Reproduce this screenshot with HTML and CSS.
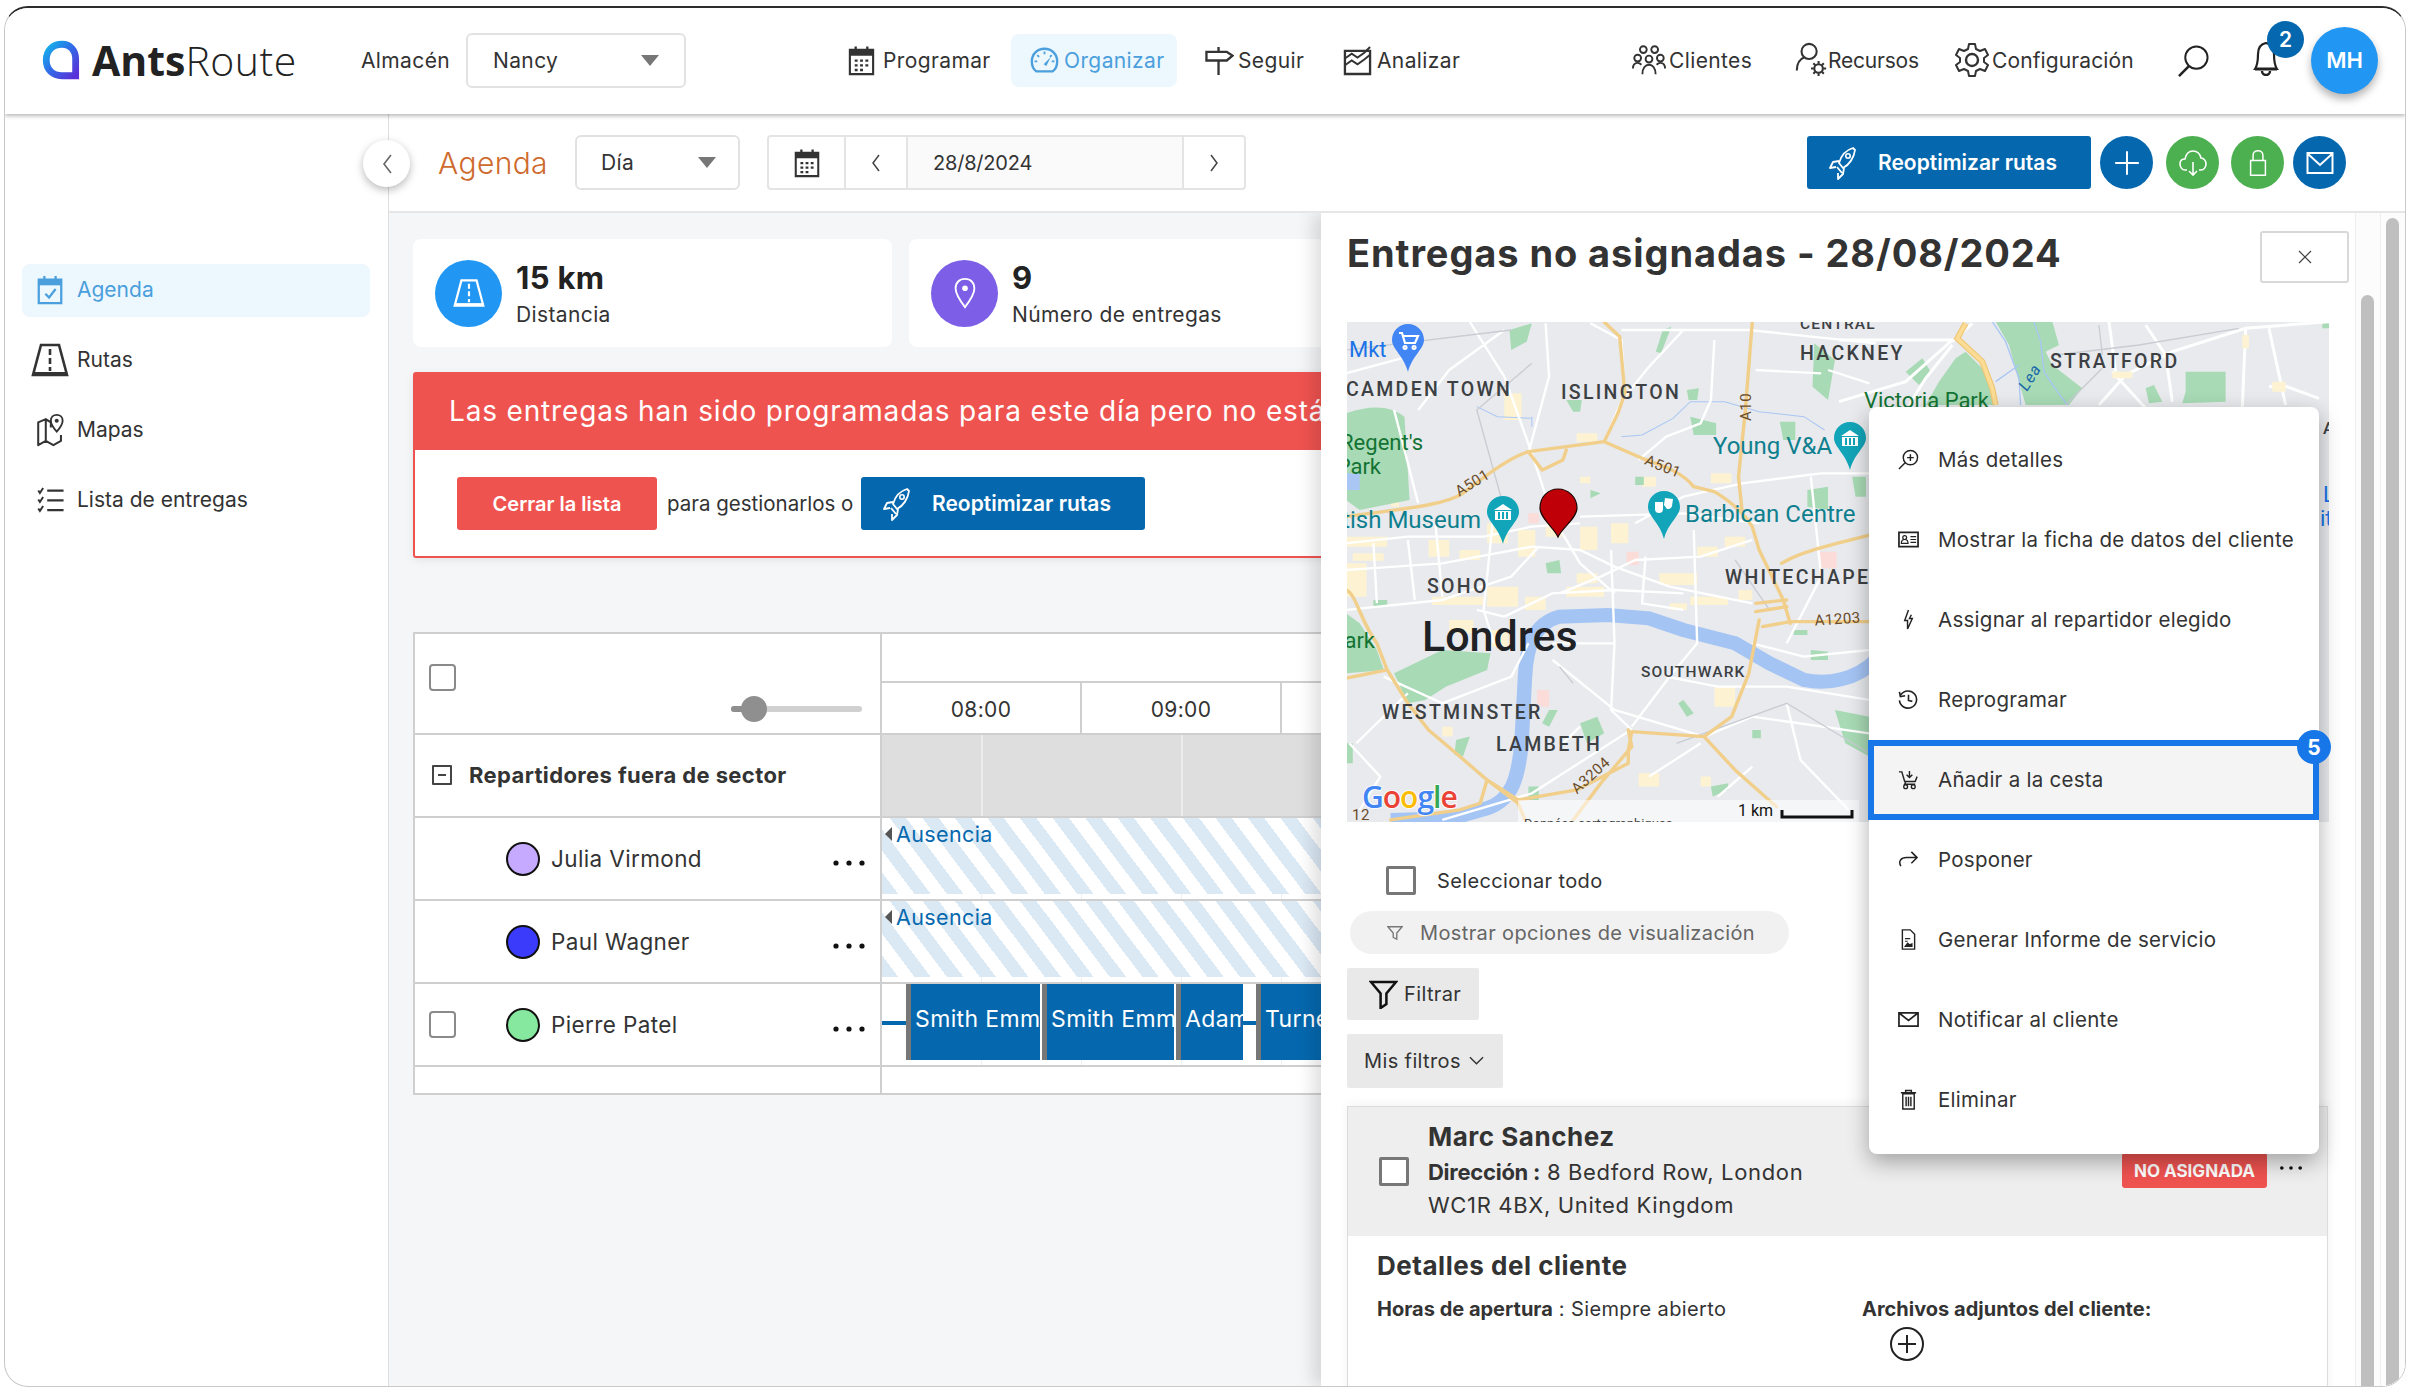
FILE: index.html
```html
<!DOCTYPE html>
<html lang="es">
<head>
<meta charset="utf-8">
<title>AntsRoute - Agenda</title>
<link rel="stylesheet" href="styles.css">
</head>
<body>
<svg class="defs" width="0" height="0" aria-hidden="true">
  <defs>
    <linearGradient id="logoGrad" x1="0" y1="0" x2="1" y2="1">
      <stop offset="0" stop-color="#12b5ea"/>
      <stop offset=".45" stop-color="#2f6fe8"/>
      <stop offset="1" stop-color="#5a30d8"/>
    </linearGradient>
    <symbol id="i-cal" viewBox="0 0 28 32">
      <path d="M2 5h24v25H2z" fill="none" stroke="currentColor" stroke-width="2.2"/>
      <path d="M2 5h24v6H2z" fill="currentColor"/>
      <path d="M8 1.5v6M20 1.5v6" stroke="currentColor" stroke-width="2.4"/>
      <path d="M7 15h3v2.4H7zM12.5 15h3v2.4h-3zM18 15h3v2.4h-3zM7 19.8h3v2.4H7zM12.5 19.8h3v2.4h-3zM18 19.8h3v2.4h-3zM7 24.6h3V27H7zM12.5 24.6h3V27h-3z" fill="currentColor"/>
    </symbol>
    <symbol id="i-road" viewBox="0 0 38 36">
      <path d="M10 3h18l8 30H2z" fill="none" stroke="currentColor" stroke-width="2.6"/>
      <path d="M2 30h34v3H2z" fill="currentColor"/>
      <path d="M19 7v6M19 16v6M19 25v4" stroke="currentColor" stroke-width="2.6"/>
    </symbol>
    <symbol id="i-rocket" viewBox="0 0 30 34">
      <path d="M25 2c-7 2-12 8-14 15l4 5c6-3 11-10 12-18zM11 15l-6 1-3 6 6-1M16 22l-1 6-5 5v-6M9 21l5 6" fill="none" stroke="#fff" stroke-width="1.8" stroke-linejoin="round"/>
      <circle cx="20" cy="10" r="2.2" fill="none" stroke="#fff" stroke-width="1.6"/>
    </symbol>
    <symbol id="i-dots" viewBox="0 0 34 8">
      <circle cx="4" cy="4" r="2.6"/><circle cx="17" cy="4" r="2.6"/><circle cx="30" cy="4" r="2.6"/>
    </symbol>
    <symbol id="i-caret" viewBox="0 0 18 11"><path d="M0 0h18L9 11z"/></symbol>
  </defs>
</svg>

<div class="frame">
  <header class="topbar">
    <div class="logo">
      <svg class="logo-mark" viewBox="0 0 40 40"><path d="M20 5c8 0 13 6 13 14v16H20C11 35 5 29 5 20S11 5 20 5z" fill="none" stroke="url(#logoGrad)" stroke-width="6.500"/></svg>
      <span class="logo-text"><b>Ants</b>Route</span>
    </div>
    <span class="wh-label">Almacén</span>
    <div class="select wh-select"><span>Nancy</span><svg class="caret"><use href="#i-caret"/></svg></div>
    <nav class="nav">
      <a class="nav-item n1"><svg class="nav-ic"><use href="#i-cal"/></svg>Programar</a>
      <a class="nav-item n2 active"><svg class="nav-ic" viewBox="0 0 32 32"><path d="M7 28C3 25 2 21 2 17 2 9 8 3 16 3s14 6 14 14c0 4-1 8-5 11z" fill="none" stroke="currentColor" stroke-width="2.6"/><path d="M15 20l8-8-5 10z" fill="currentColor"/><path d="M16 6v3M8 10l2 2M5 17h3M27 17h-3M24 10l-2 2" stroke="currentColor" stroke-width="2"/></svg>Organizar</a>
      <a class="nav-item n3"><svg class="nav-ic" viewBox="0 0 30 32"><path d="M1.500 7h21l6 4-6 5h-21z" fill="none" stroke="currentColor" stroke-width="2.4"/><path d="M14 2v5M14 16v15" stroke="currentColor" stroke-width="2.4"/></svg>Seguir</a>
      <a class="nav-item n4"><svg class="nav-ic" viewBox="0 0 30 32"><path d="M2 6h26v24H2z" fill="none" stroke="currentColor" stroke-width="2.4"/><path d="M2 14l7-5 6 4 7-5 6-6M2 21l7-5 6 4 7-5 6-5" fill="none" stroke="currentColor" stroke-width="2"/></svg>Analizar</a>
    </nav>
    <nav class="nav-right">
      <a class="nav-item r1"><svg class="nav-ic wide" viewBox="0 0 36 34"><g fill="none" stroke="currentColor" stroke-width="2"><circle cx="12" cy="6" r="3.600"/><circle cx="24" cy="6" r="3.600"/><circle cx="6" cy="15" r="3.600"/><circle cx="18" cy="16" r="3.600"/><circle cx="30" cy="15" r="3.600"/><path d="M1 26c0-4 2-6 5-6 2 0 3 1 4 2M35 26c0-4-2-6-5-6-2 0-3 1-4 2M11 32c0-6 3-10 7-10s7 4 7 10"/></g></svg>Clientes</a>
      <a class="nav-item r2"><svg class="nav-ic wide" viewBox="0 0 34 38"><g fill="none" stroke="currentColor" stroke-width="2.200"><circle cx="15" cy="10" r="8"/><path d="M2 30c0-7 3-12 8-14"/><circle cx="25" cy="28" r="4.500"/><path d="M25 20v3M25 33v3M17 28h3M30 28h3M19.500 22.500l2 2M28.500 31.500l2 2M30.500 22.500l-2 2M21.500 31.500l-2 2"/></g></svg>Recursos</a>
      <a class="nav-item r3"><svg class="nav-ic wide" viewBox="0 0 34 36"><path d="M14 2h6l1 5 4 2 5-2 3 6-4 3v4l4 3-3 6-5-2-4 2-1 5h-6l-1-5-4-2-5 2-3-6 4-3v-4L1 13l3-6 5 2 4-2z" fill="none" stroke="currentColor" stroke-width="2" stroke-linejoin="round"/><circle cx="17" cy="18" r="6" fill="none" stroke="currentColor" stroke-width="2.400"/></svg>Configuración</a>
      <svg class="search" viewBox="0 0 34 34"><circle cx="20" cy="14" r="11.500" fill="none" stroke="currentColor" stroke-width="2"/><path d="M12 23L2 33" stroke="currentColor" stroke-width="2.600"/></svg>
      <div class="bell-wrap">
        <svg class="bell" viewBox="0 0 26 34"><path d="M13 1c-5 1-8 5-8 11 0 7-1 12-3 15h22c-2-3-3-8-3-15 0-6-3-10-8-11z" fill="none" stroke="currentColor" stroke-width="2.200"/><path d="M2 27h22" stroke="currentColor" stroke-width="3"/><path d="M9 29a4 4 0 0 0 8 0" fill="none" stroke="currentColor" stroke-width="2.400"/></svg>
        <span class="bell-badge">2</span>
      </div>
      <span class="avatar">MH</span>
    </nav>
  </header>

  <div class="layout">
    <aside class="sidebar">
      <a class="side-item active"><svg class="side-ic s1" viewBox="0 0 28 32"><path d="M2 5h24v25H2z" fill="none" stroke="currentColor" stroke-width="2.400"/><path d="M2 5h24v6H2z" fill="currentColor"/><path d="M8 1v6M20 1v6" stroke="currentColor" stroke-width="2.400"/><path d="M9 20l4 4 7-9" fill="none" stroke="currentColor" stroke-width="2.400"/></svg>Agenda</a>
      <a class="side-item"><svg class="side-ic s2"><use href="#i-road"/></svg>Rutas</a>
      <a class="side-item"><svg class="side-ic s3" viewBox="0 0 38 40"><path d="M5 11l9-4v26l-9 5zM14 7l6 4v6M14 33l9 5 9-5V26M5 38V11" fill="none" stroke="currentColor" stroke-width="2.400" stroke-linejoin="round"/><path d="M27 2c-4 0-7 3-7 7 0 5 7 13 7 13s7-8 7-13c0-4-3-7-7-7z" fill="none" stroke="currentColor" stroke-width="2.200"/><circle cx="27" cy="9" r="2.400" fill="currentColor"/></svg>Mapas</a>
      <a class="side-item"><svg class="side-ic s4" viewBox="0 0 38 32"><path d="M4 5l2 3 4-6M4 16l2 3 4-6M4 27l2 3 4-6" fill="none" stroke="currentColor" stroke-width="2.400"/><path d="M15 5h20M15 17h20M15 29h20" stroke="currentColor" stroke-width="2.800"/></svg>Lista de entregas</a>
    </aside>

    <main class="main">
      <button class="collapse"><svg viewBox="0 0 12 22"><path d="M10 2L3 11l7 9" fill="none" stroke="#666" stroke-width="1.600"/></svg></button>
      <div class="toolbar">
        <h1 class="page-title">Agenda</h1>
        <div class="select day-select"><span>Día</span><svg class="caret"><use href="#i-caret"/></svg></div>
        <div class="date-group">
          <span class="dg-cell dg-cal"><svg class="dg-ic"><use href="#i-cal"/></svg></span>
          <span class="dg-cell dg-nav"><svg class="chev" viewBox="0 0 12 22"><path d="M9 3L3 11l6 8" fill="none" stroke="#444" stroke-width="1.500"/></svg></span>
          <span class="dg-date">28/8/2024</span>
          <span class="dg-cell dg-next"><svg class="chev" viewBox="0 0 12 22"><path d="M3 3l6 8-6 8" fill="none" stroke="#444" stroke-width="1.500"/></svg></span>
        </div>
        <div class="actions">
          <button class="btn-primary"><svg class="rocket"><use href="#i-rocket"/></svg>Reoptimizar rutas</button>
          <span class="round blue a-plus"><svg viewBox="0 0 26 26"><path d="M13 2v22M2 13h22" stroke="#fff" stroke-width="1.800"/></svg></span>
          <span class="round green a-cloud"><svg viewBox="0 0 28 28"><path d="M8 21H6c-3 0-5-3-5-6s2-5 5-5c1-5 4-8 8-8s7 3 8 7c3 0 5 3 5 6s-2 6-5 6h-2" fill="none" stroke="#fff" stroke-width="1.600"/><path d="M14 13v13M10 22l4 4 4-4" fill="none" stroke="#fff" stroke-width="1.600"/></svg></span>
          <span class="round green a-lock"><svg viewBox="0 0 24 34"><path d="M3 14h18v18H3zM6 14V8c0-4 3-6 6-6s6 2 6 6v6" fill="none" stroke="#fff" stroke-width="1.800"/></svg></span>
          <span class="round blue a-mail"><svg viewBox="0 0 28 24"><path d="M1.500 2h25v20h-25zM2 3l12 11L26 3" fill="none" stroke="#fff" stroke-width="2"/></svg></span>
        </div>
      </div>

      <div class="content">
        <div class="stats">
          <div class="stat">
            <span class="stat-ic c-blue"><svg class="stat-svg"><use href="#i-road"/></svg></span>
            <div><div class="stat-val">15 km</div><div class="stat-label">Distancia</div></div>
          </div>
          <div class="stat">
            <span class="stat-ic c-purple"><svg class="stat-svg" viewBox="0 0 24 34"><path d="M12 2C6 2 2 6 2 12c0 7 10 20 10 20s10-13 10-20c0-6-4-10-10-10z" fill="none" stroke="#fff" stroke-width="2"/><circle cx="12" cy="12" r="3" fill="#fff"/></svg></span>
            <div><div class="stat-val">9</div><div class="stat-label">Número de entregas</div></div>
          </div>
        </div>

        <section class="alert">
          <div class="alert-head">Las entregas han sido programadas para este día pero no están todas asignadas</div>
          <div class="alert-body">
            <button class="btn-red">Cerrar la lista</button>
            <span class="alert-text">para gestionarlos o</span>
            <button class="btn-primary"><svg class="rocket"><use href="#i-rocket"/></svg>Reoptimizar rutas</button>
          </div>
        </section>

        <section class="timeline">
          <div class="tl-row tl-head">
            <div class="tl-left tl-head-left">
              <span class="check"></span>
              <div class="slider"><span class="slider-thumb"></span></div>
            </div>
            <div class="tl-right tl-head-right">
              <div class="tl-blank"></div>
              <div class="tl-hours"><span class="hour">08:00</span><span class="hour">09:00</span><span class="hour">10:00</span></div>
            </div>
          </div>
          <div class="tl-row">
            <div class="tl-left group"><span class="minus"></span><b>Repartidores fuera de sector</b></div>
            <div class="tl-right gray"></div>
          </div>
          <div class="tl-row">
            <div class="tl-left driver"><span class="dot d-purple"></span><span class="name">Julia Virmond</span><svg class="dots"><use href="#i-dots"/></svg></div>
            <div class="tl-right grid"><div class="absence"><span class="tri"></span>Ausencia</div></div>
          </div>
          <div class="tl-row">
            <div class="tl-left driver"><span class="dot d-blue"></span><span class="name">Paul Wagner</span><svg class="dots"><use href="#i-dots"/></svg></div>
            <div class="tl-right grid"><div class="absence"><span class="tri"></span>Ausencia</div></div>
          </div>
          <div class="tl-row">
            <div class="tl-left driver has-check"><span class="check"></span><span class="dot d-green"></span><span class="name">Pierre Patel</span><svg class="dots"><use href="#i-dots"/></svg></div>
            <div class="tl-right grid events">
              <i class="link l1"></i><span class="ev e1">Smith Emma</span><span class="ev e2">Smith Emma</span><span class="ev e3">Adams</span><i class="link l2"></i><span class="ev e4">Turner</span>
            </div>
          </div>
          <div class="tl-row tl-end"><div class="tl-left"></div><div class="tl-right"></div></div>
        </section>

        <aside class="panel">
          <div class="panel-body">
            <div class="panel-title-row">
              <h2 class="panel-title">Entregas no asignadas - 28/08/2024</h2>
              <button class="close"><svg viewBox="0 0 14 14"><path d="M1 1l12 12M13 1L1 13" stroke="#444" stroke-width="1.200"/></svg></button>
            </div>

            <div class="map">
              <svg viewBox="0 0 982 500" class="map-svg">
                <rect width="982" height="500" fill="#e8eaed"/>
                <g transform="translate(-8,-12) scale(.3444,.3333)">
                  <g fill="#fdf3d3">
                    <path d="M690 370h60v25h-60zM150 560h25v30h-25zM480 250h50v80h-50zM20 680h120v30H20zM40 730h90v22H40zM260 690h60v50h-60zM350 720h60v30h-60zM430 640h60v60h-60zM520 660h50v80h-50zM600 640h50v40h-50zM700 650h50v70h-50zM790 640h50v60h-50zM1040 710h60v30h-60zM270 860h150v25H270zM430 830h90v60h-90zM540 860h60v40h-60zM660 830h110v30H660zM690 790h60v30h-60zM930 790h110v35H930zM1020 860h110v25h-110zM960 880h50v20h-50zM1120 680h60v30h-60zM1160 840h40v30h-40zM320 930h70v40h-70zM440 960h50v50h-50zM1090 1130h60v60h-60zM300 1250h30v30h-30zM870 1390h60v40h-60zM1050 1400h30v30h-30zM20 760h60v100H20zM700 500h30v20h-30zM880 500h40v30h-40zM1080 490h60v30h-60z"/>
                  </g>
                  <g fill="#fcdcd8"><path d="M1395 725h50v50h-50zM835 725h35v40h-35zM575 1140h35v50h-35zM550 610h30v30h-30z"/></g>
                  <g fill="#a8dab5">
                    <path d="M20 310Q130 270 190 320L205 570 60 600 20 570zM20 910l40 30 50 80 20 60-110 10zM160 1090l140-70 140 10-10 50-120 50-60 40-50 10z"/>
                    <path d="M495 60l65-20-15 55-45 25zM660 270h45l-5 35h-20zM1010 240l35-5-5 35h-25zM1020 320l75 20v35h-65zM1280 335h45v55h-35zM1380 100l60 50-20 120-45-40zM600 760l40-10 5 40h-40zM940 60l25-10-30 80-15-5zM1360 540l60-10v70l-60-10zM1370 1020l50 5v25h-50zM1440 1200l100 20v120l-70-40zM340 1290l40-10-20 60-25-5zM610 1200h25l-25 50-20-10zM700 1240l50-20 20 50-50 30zM1200 1260h25v25h-25zM1000 1170l30 40-20 10-25-40zM1080 1430l50-10v20l-45 20zM550 1430h30v40h-30zM730 540l30 10-30 15zM860 500h25v25h-25zM1490 500h40v60h-30zM100 870h40v20h-40zM1320 960h40v15h-40zM20 1300h20v60H20z"/>
                  </g>
                  <path d="M20 490h40v50H20z" fill="#a9c6f5"/>
                  <path d="M150 1530L330 1525 430 1495C500 1470 520 1410 530 1300L540 1100C545 1000 570 940 640 920L780 915 900 925 1000 960 1150 1000 1250 1060 1350 1110C1420 1125 1500 1110 1560 1050" fill="none" stroke="#a4c4f4" stroke-width="42"/>
                  <path d="M400 290l60 30 100 5M560 320v30M820 380l60-5 90-50 50-50 100 0 100 30 130 15 60 40" fill="none" stroke="#a9c6f5" stroke-width="3"/>
                  <g fill="none" stroke="#fff" stroke-width="7" stroke-linejoin="round">
                    <path d="M380 36L480 200 560 430 620 620 700 760 800 850M600 40L610 200 550 430M730 40L820 90 830 250 770 395M1000 60L900 170 830 260M820 60L1190 60 1560 100M1090 90L1080 270 1050 340 950 380 870 450M230 300L320 180 480 60M20 700L200 680 420 680 560 650 700 640M20 780L300 760 560 710 700 720 800 770 960 830 1200 880M20 900L300 870 500 800 580 710M400 900L480 920 620 850 800 840 1000 850M640 850L760 800 860 750 1050 740 1200 690M860 640L1000 560 1170 520 1400 490 1540 490M700 620L1000 610 1220 640M790 720L800 1000 790 1200 850 1260M890 740L880 880 1000 900M1030 660L1040 1000 960 1100 850 1250M550 1000L500 1100 300 1180 130 1100M620 1050L800 1200 1060 1280 1200 1220 1540 1270M300 1530L560 1450 840 1265M950 1100L1100 1130 1300 1130 1540 1170M1300 1180L1340 1350 1480 1500M1200 1000L1350 1040 1540 1020M30 1300L120 1400 60 1500M200 1150L50 1300M900 1400L1050 1300M450 600L420 900 450 1000M280 640L300 860M200 690L220 870M100 700L110 880M1370 500L1400 800 1300 1000M1420 180L1540 220M1210 180L1400 190M20 190L200 140M160 300L230 580M620 1000L800 1000M640 1310L700 1250M1100 1460L1200 1370"/>
                  </g>
                  <g fill="none" stroke="#c9ccd3" stroke-width="4">
                    <path d="M20 120L500 60M560 160L400 300 470 560M980 1300L1300 1180 1540 1330M640 1070L680 1120M1150 750L1250 900"/>
                  </g>
                  <path id="majors" d="M20 620C150 600 300 590 360 550 420 500 500 440 550 425L770 395 880 445C950 470 1000 490 1030 530L1090 545C1130 570 1170 600 1200 650L1220 720 1290 870 1310 940M550 425L590 480 650 450 660 420M770 395L810 310 830 250 815 80 770 36M1200 36L1180 300 1160 500 1170 600M1285 760C1350 720 1450 700 1560 670M1310 935H1560M1210 880L1300 870M1210 905L1300 890M1230 950L1310 935M1220 930L1190 1090 1140 1220 1060 1280 850 1265 840 1320 840 1360 690 1440 520 1470 430 1410 410 1480 350 1500 150 1530M840 1260L850 1310 760 1420 680 1530M1060 1280L1150 1380 1270 1490M20 840C50 850 60 930 110 1000L140 1080 20 1105M140 1080L200 1180 260 1260 340 1330 430 1410 520 1480 540 1530" fill="none" stroke="#f1cf8a" stroke-width="10" stroke-linejoin="round" stroke-linecap="round"/>
                </g>

                <g transform="translate(492,-7) scale(.3333)">
                  <path d="M470 20h170l20 70-40 20 20 40 90 70-40 50H560l-20-70-30-110zM380 110l60 60 25 100H260l40-70 50-70zM200 170l50-40 25 40-35 40zM1040 170h120v90l-130 5 10-35zM920 220l25-10 25 50-40 5zM1450 22h20v18h-20z" fill="#a8dab5"/>
                  <path d="M585 20l20 60 10 90 40 60 30 40M460 20l40 60 40 110 5 80M540 150l-70 50" fill="none" stroke="#a9c6f5" stroke-width="4"/>
                  <g fill="none" stroke="#fff" stroke-width="9">
                    <path d="M0 75H340L200 200 0 260M400 25L340 80M340 90L260 190 210 270M780 270L860 180 1000 110 1220 40 1470 20M920 30L980 120 1000 260M1220 40L1210 280M1290 40L1340 270M1440 250L1330 210 1290 215M820 170L920 280M810 20L830 170"/>
                  </g>
                  <path d="M650 120L900 90 1200 40M680 270L790 160M780 30L790 120" fill="none" stroke="#c9ccd3" stroke-width="4"/>
                  <path d="M380 25L355 70 430 140 460 220 470 270" fill="none" stroke="#efc676" stroke-width="18"/>
                  <path d="M380 25L355 70 430 140 460 220 470 270" fill="none" stroke="#fbdc95" stroke-width="11"/>
                  <path d="M820 170h60v20h-60zM1300 200h40v30h-40zM1210 60h20v40h-20z" fill="#fdf3d3"/>
                </g>

                <g class="m-area">
                  <text x="-1" y="74">CAMDEN TOWN</text>
                  <text x="214" y="77">ISLINGTON</text>
                  <text x="453" y="38">HACKNEY</text>
                  <text x="453" y="7" class="m-small">CENTRAL</text>
                  <text x="703" y="46">STRATFORD</text>
                  <text x="80" y="271">SOHO</text>
                  <text x="378" y="262">WHITECHAPEL</text>
                  <text x="294" y="355" class="m-small">SOUTHWARK</text>
                  <text x="35" y="397">WESTMINSTER</text>
                  <text x="149" y="429">LAMBETH</text>
                </g>
                <text x="75" y="329" class="m-city">Londres</text>
                <g class="m-park">
                  <text x="76" y="128" text-anchor="end">Regent's</text>
                  <text x="34" y="152" text-anchor="end">Park</text>
                  <text x="28" y="326" text-anchor="end">Hyde Park</text>
                  <text x="517" y="86">Victoria Park</text>
                </g>
                <g class="m-poi">
                  <text x="134" y="206" text-anchor="end">British Museum</text>
                  <text x="338" y="200">Barbican Centre</text>
                  <text x="366" y="132">Young V&amp;A</text>
                </g>
                <text x="2" y="35" class="m-mkt">Mkt</text>
                <text x="976" y="180" class="m-mkt">L</text>
                <text x="973" y="204" class="m-mkt">it</text>
                <text x="976" y="112" class="m-area-s">A</text>
                <g class="m-road">
                  <text transform="translate(128,165) rotate(-32)">A501</text>
                  <text transform="translate(314,149) rotate(22)">A501</text>
                  <text transform="translate(404,85) rotate(-90)">A10</text>
                  <text transform="translate(491,302) rotate(-4)">A1203</text>
                  <text transform="translate(247,457) rotate(-42)">A3204</text>
                  <text transform="translate(5,498)">12</text>
                </g>
                <text transform="translate(680,70) rotate(-58)" class="m-lea">Lea</text>

                <g>
                  <path d="M61 2c-9 0-16 7-16 16 0 9 12 16 16 32 4-16 16-23 16-32 0-9-7-16-16-16z" fill="#4285f4"/>
                  <path d="M52 11h3l3 10h10l3-7H56M58 24a1.500 1.500 0 1 0 .1 0M67 24a1.500 1.500 0 1 0 .1 0" fill="none" stroke="#fff" stroke-width="2.200"/>
                  <g id="mus"><path d="M156 174c-9 0-16 7-16 16 0 9 12 16 16 32 4-16 16-23 16-32 0-9-7-16-16-16z" fill="#12a4b8"/>
                  <path d="M147 188l9-6 9 6zM148 189h16v9h-16z" fill="#fff"/><path d="M151 190h2v7h-2zM155 190h2v7h-2zM159 190h2v7h-2z" fill="#12a4b8"/></g>
                  <use href="#mus" x="347" y="-74"/>
                  <path d="M317 169c-9 0-16 7-16 16 0 9 12 16 16 32 4-16 16-23 16-32 0-9-7-16-16-16z" fill="#12a4b8"/>
                  <path d="M308 180h8v7c0 3-2 4-4 4s-4-1-4-4zM318 176l8 1-1 7c-1 3-3 3-5 3l-3-4z" fill="#fff"/>
                </g>

                <path d="M211 167c-10 0-18 8-18 19 0 10 14 20 18 29 4-9 19-19 19-29 0-11-9-19-19-19z" fill="#c00008" stroke="#1d0505" stroke-width="1.200"/>

                <rect x="171" y="478" width="341" height="22" fill="#fff" opacity=".55"/>
                <text x="177" y="506" class="m-attr">Données cartographiques</text>
                <text x="15" y="486" class="m-google"><tspan fill="#4285f4">G</tspan><tspan fill="#ea4335">o</tspan><tspan fill="#fbbc05">o</tspan><tspan fill="#4285f4">g</tspan><tspan fill="#34a853">l</tspan><tspan fill="#ea4335">e</tspan></text>
                <text x="391" y="494" class="m-km">1 km</text>
                <path d="M435 488v7h70v-7" fill="none" stroke="#111" stroke-width="3"/>
              </svg>
            </div>

            <label class="select-all"><span class="check big"></span>Seleccionar todo</label>
            <div class="pill">
              <svg class="pill-ic" viewBox="0 0 18 18"><path d="M1 2h16l-6 7v7l-4-2V9z" fill="none" stroke="#777" stroke-width="1.500"/></svg>
              Mostrar opciones de visualización
            </div>
            <button class="filter-btn f1"><svg class="filter-ic" viewBox="0 0 30 30"><path d="M2 2h26L18 14v11l-6 4V14z" fill="none" stroke="#111" stroke-width="2.600"/></svg>Filtrar</button>
            <button class="filter-btn f2">Mis filtros<svg class="down" viewBox="0 0 16 10"><path d="M1 1l7 7 7-7" fill="none" stroke="#333" stroke-width="1.500"/></svg></button>

            <article class="delivery">
              <div class="delivery-head">
                <span class="check big"></span>
                <div class="delivery-info">
                  <div class="delivery-name">Marc Sanchez</div>
                  <div class="delivery-line"><b>Dirección :</b> 8 Bedford Row, London</div>
                  <div class="delivery-line">WC1R 4BX, United Kingdom</div>
                </div>
                <span class="tag">NO ASIGNADA</span>
                <svg class="dots small"><use href="#i-dots"/></svg>
              </div>
              <div class="delivery-body">
                <h3 class="section-title">Detalles del cliente</h3>
                <div class="detail-cols">
                  <div class="detail"><b>Horas de apertura</b> : Siempre abierto</div>
                  <div class="detail files">
                    <b>Archivos adjuntos del cliente:</b>
                    <svg class="add" viewBox="0 0 36 36"><circle cx="18" cy="18" r="16" fill="none" stroke="#222" stroke-width="2"/><path d="M18 9v18M9 18h18" stroke="#222" stroke-width="2"/></svg>
                  </div>
                </div>
              </div>
            </article>
          </div>

          <div class="scrolls">
            <div class="scroll-track inner"><span class="scroll-thumb"></span></div>
            <div class="scroll-track outer"><span class="scroll-thumb"></span></div>
          </div>

          <ul class="menu">
            <li class="menu-item"><svg viewBox="0 0 22 22"><circle cx="13" cy="9" r="7.500" fill="none" stroke="#222" stroke-width="1.500"/><path d="M13 5.500v7M9.500 9h7M7.500 14.500L1 21" stroke="#222" stroke-width="1.500"/></svg>Más detalles</li>
            <li class="menu-item"><svg viewBox="0 0 22 18"><path d="M1 1.500h20v15H1z" fill="none" stroke="#222" stroke-width="1.800"/><circle cx="7" cy="7" r="2" fill="none" stroke="#222" stroke-width="1.300"/><path d="M3.500 13c0-3 1.500-4 3.500-4s3.500 1 3.500 4zM13 6h6M13 9h6M13 12h6" stroke="#222" stroke-width="1.300" fill="none"/></svg>Mostrar la ficha de datos del cliente</li>
            <li class="menu-item"><svg viewBox="0 0 22 22"><path d="M11 1L7 12h3v9l5-11h-3l2-4" fill="none" stroke="#222" stroke-width="1.500"/></svg>Assignar al repartidor elegido</li>
            <li class="menu-item"><svg viewBox="0 0 22 22"><path d="M3 6a9 9 0 1 1-1.500 6M1.500 3l1 5 5-1" fill="none" stroke="#222" stroke-width="1.700"/><path d="M11 6v6l4 1" fill="none" stroke="#222" stroke-width="1.700"/></svg>Reprogramar</li>
            <li class="menu-item current"><svg viewBox="0 0 22 20"><path d="M1 2h3l3 10h11l2-5M8 13l-1 2h11" fill="none" stroke="#222" stroke-width="1.500"/><path d="M12 1v7M9 5l3 3 3-3" fill="none" stroke="#222" stroke-width="1.500"/><circle cx="8" cy="17.500" r="2" fill="none" stroke="#222" stroke-width="1.400"/><circle cx="16" cy="17.500" r="2" fill="none" stroke="#222" stroke-width="1.400"/></svg>Añadir a la cesta<span class="step">5</span></li>
            <li class="menu-item"><svg viewBox="0 0 22 20"><path d="M3 17c-3-5 0-9 6-9h11M14 2l6 6-6 6" fill="none" stroke="#222" stroke-width="1.600"/></svg>Posponer</li>
            <li class="menu-item"><svg viewBox="0 0 18 24"><path d="M2 1h9l5 5v17H2z" fill="none" stroke="#222" stroke-width="1.600"/><path d="M5 11h6M5 14h3M5 20l3-4 2 2 3-1v3z" stroke="#222" stroke-width="1.300" fill="#222"/></svg>Generar Informe de servicio</li>
            <li class="menu-item"><svg viewBox="0 0 22 18"><path d="M1 2h20v14H1zM1.500 2.500L11 10l9.500-7.500" fill="none" stroke="#222" stroke-width="1.800"/></svg>Notificar al cliente</li>
            <li class="menu-item"><svg viewBox="0 0 18 22"><path d="M3 5h12v16H3zM1 4h16M6 4V1.500h6V4M6.500 8v10M9 8v10M11.500 8v10" fill="none" stroke="#222" stroke-width="1.500"/></svg>Eliminar</li>
          </ul>
        </aside>
      </div>
    </main>
  </div>
</div>
</body>
</html>
```
FILE: styles.css
```css
* { box-sizing: border-box; }
html, body { margin: 0; height: 100%; background: #fff; overflow: hidden; }
body { font-family: Inter, "Open Sans", sans-serif; color: #333; font-size: 21px; letter-spacing: .018em; }
b { font-weight: 700; }
a { color: inherit; }
button { font: inherit; letter-spacing: inherit; border: 0; cursor: pointer; padding: 0; }
.defs { position: absolute; }

.frame { margin: 6px 4px 0; height: 1381px; border: 1px solid #c9c9c9; border-top: 2px solid #2c2c2c; border-radius: 24px; overflow: hidden; display: flex; flex-direction: column; background: #fff; }

/* Top bar */
.topbar { height: 106px; flex: none; display: flex; align-items: center; background: #fff; box-shadow: 0 2px 4px rgba(0,0,0,.28); position: relative; z-index: 3; padding: 0 0 2px 36px; }
.logo { display: flex; align-items: center; width: 320px; }
.logo-mark { width: 42px; height: 42px; flex: none; margin-right: 9px; }
.logo-text { font-family: "Open Sans", sans-serif; font-size: 41px; font-weight: 300; letter-spacing: .012em; color: #222; line-height: 1; }
.logo-text b { font-weight: 700; letter-spacing: 0; }
.wh-label { width: 105px; font-size: 21px; color: #333; }
.select { display: flex; align-items: center; justify-content: space-between; background: #fff; border: 2px solid #e2e2e2; border-radius: 6px; color: #333; font-size: 21px; }
.wh-select { width: 220px; height: 55px; padding: 0 25px 0 25px; }
.caret { width: 18px; height: 11px; fill: #777; }
.nav { display: flex; align-items: center; margin-left: 161px; }
.nav-item { display: flex; align-items: center; font-size: 21px; white-space: nowrap; color: #333; height: 53px; gap: 7px; }
.nav-ic { width: 29px; height: 31px; flex: none; }
.nav-ic.wide { width: 34px; height: 36px; }
.n1 { width: 164px; }
.n2 { width: 166px; background: #edf7fe; color: #4a9fdc; border-radius: 8px; padding-left: 19px; gap: 5px; }
.n3 { width: 138px; margin-left: 28px; gap: 4px; }
.n4 { width: 116px; gap: 5px; }
.nav-right { display: flex; align-items: center; margin-left: 173px; }
.r1 { width: 162px; gap: 3px; }
.r2 { width: 161px; gap: 0; letter-spacing: -.01em; }
.r3 { width: 222px; gap: 3px; letter-spacing: .005em; }
.search { width: 33px; height: 33px; color: #222; flex: none; }
.bell-wrap { position: relative; margin-left: 43px; width: 58px; height: 36px; flex: none; }
.bell { width: 26px; height: 34px; color: #222; display: block; }
.bell-badge { position: absolute; left: 14px; top: -21px; width: 37px; height: 37px; border-radius: 50%; background: #0568ae; color: #fff; font-size: 21px; font-weight: 600; display: flex; align-items: center; justify-content: center; letter-spacing: 0; }
.avatar { width: 67px; height: 67px; flex: none; border-radius: 50%; background: #2196f3; color: #fff; font-weight: 600; font-size: 22px; display: flex; align-items: center; justify-content: center; box-shadow: 0 5px 9px rgba(0,0,0,.3); letter-spacing: 0; }

/* Layout */
.layout { display: flex; flex: 1; min-height: 0; }
.sidebar { width: 384px; flex: none; border-right: 1px solid #dedede; padding: 150px 18px 0 17px; display: flex; flex-direction: column; gap: 17px; }
.side-item { height: 53px; display: flex; align-items: center; font-size: 21px; border-radius: 8px; color: #333; padding: 0 0 2px 14px; white-space: nowrap; letter-spacing: 0; }
.side-item.active { background: #edf7fe; color: #4a9fdc; }
.side-ic { flex: none; }
.s1 { width: 28px; height: 30px; margin-right: 13px; }
.s2 { width: 38px; height: 36px; margin: 0 8px 0 -5px; }
.s3 { width: 32px; height: 34px; margin: 0 11px 0 -2px; }
.s4 { width: 31px; height: 27px; margin: 0 11px 0 -1px; }

.main { flex: 1; min-width: 0; display: flex; flex-direction: column; position: relative; }
.collapse { position: absolute; left: -26px; top: 26px; width: 47px; height: 47px; border-radius: 50%; background: #fff; box-shadow: 0 3px 8px rgba(0,0,0,.28); z-index: 2; display: flex; align-items: center; justify-content: center; }
.collapse svg { width: 12px; height: 22px; }

.toolbar { height: 99px; flex: none; display: flex; align-items: center; border-bottom: 2px solid #e6e6e6; padding: 0 59px 0 49px; }
.page-title { margin: 0; width: 137px; font-size: 30px; font-weight: 300; color: #cf6a2e; }
.day-select { width: 165px; height: 55px; padding: 0 22px 0 24px; }
.date-group { margin-left: 27px; width: 479px; height: 55px; display: flex; align-items: stretch; border: 2px solid #e4e4e4; border-radius: 4px; }
.dg-cell { display: flex; align-items: center; justify-content: center; }
.dg-cal { width: 77px; border-right: 2px solid #e4e4e4; }
.dg-ic { width: 28px; height: 30px; color: #333; }
.dg-nav { width: 62px; border-right: 2px solid #e4e4e4; }
.dg-date { flex: 1; background: #fafafa; display: flex; align-items: center; padding-left: 25px; font-size: 20px; letter-spacing: -.01em; }
.dg-next { width: 62px; border-left: 2px solid #e4e4e4; }
.chev { width: 12px; height: 22px; }
.actions { margin-left: auto; display: flex; align-items: center; }
.btn-primary { height: 53px; width: 284px; background: #0568ae; color: #fff; font-weight: 600; font-size: 21px; letter-spacing: 0; border-radius: 3px; display: flex; align-items: center; padding-left: 21px; gap: 20px; flex: none; white-space: nowrap; }
.rocket { width: 30px; height: 34px; flex: none; }
.round { width: 53px; height: 53px; border-radius: 50%; display: flex; align-items: center; justify-content: center; flex: none; }
.round svg { width: 28px; height: 28px; }
.round.blue { background: #0568ae; }
.round.green { background: #4caf50; }
.a-plus { margin-left: 9px; }
.a-cloud { margin-left: 13px; }
.a-lock { margin-left: 12px; }
.a-mail { margin-left: 9px; }

/* Content */
.content { flex: 1; min-height: 0; background: #f5f6f8; padding: 26px 24px; position: relative; overflow: hidden; }
.stats { display: flex; gap: 17px; width: 1100px; }
.stat { width: 479px; height: 108px; background: #fff; border-radius: 8px; display: flex; align-items: center; padding-left: 22px; gap: 14px; flex: none; }
.stat-ic { width: 67px; height: 67px; border-radius: 50%; display: flex; align-items: center; justify-content: center; color: #fff; flex: none; }
.c-blue { background: #2196f3; }
.c-purple { background: #7c5fe6; }
.stat-svg { width: 32px; height: 32px; }
.stat-val { font-size: 31px; font-weight: 700; color: #222; line-height: 40px; letter-spacing: .01em; }
.stat-label { font-size: 21px; color: #333; margin-top: 4px; line-height: 26px; }

.alert { width: 1100px; margin-top: 25px; border: 2px solid #ef5350; border-radius: 3px; background: #fff; height: 186px; box-shadow: 0 2px 8px rgba(0,0,0,.08); }
.alert-head { height: 76px; background: #ef5350; color: #fff; font-size: 28px; letter-spacing: .03em; display: flex; align-items: center; padding: 0 0 2px 34px; white-space: nowrap; overflow: hidden; }
.alert-body { display: flex; align-items: center; padding: 27px 0 0 42px; }
.btn-red { width: 200px; height: 53px; background: #ef5350; color: #fff; font-weight: 600; font-size: 20px; letter-spacing: 0; border-radius: 3px; flex: none; }
.alert-text { margin-left: 10px; width: 194px; flex: none; font-size: 20.500px; letter-spacing: 0; white-space: nowrap; }

.timeline { width: 1100px; margin-top: 74px; border: 2px solid #cfcfcf; border-right: 0; background: #fff; }
.tl-row { display: flex; height: 83px; border-bottom: 2px solid #cfcfcf; }
.tl-head { height: 101px; }
.tl-end { height: 26px; border-bottom: 0; }
.tl-left { width: 467px; flex: none; border-right: 2px solid #cfcfcf; display: flex; align-items: center; position: relative; }
.tl-right { flex: 1; position: relative; }
.tl-head-left { padding-left: 14px; }
.tl-head-right { display: flex; flex-direction: column; }
.tl-blank { height: 49px; border-bottom: 2px solid #cfcfcf; }
.tl-hours { flex: 1; display: flex; }
.hour { width: 200px; border-right: 2px solid #cfcfcf; display: flex; align-items: center; justify-content: center; font-size: 21px; padding-top: 2px; }
.check { width: 27px; height: 27px; border: 2px solid #8a8a8a; border-radius: 4px; background: #fff; flex: none; display: block; }
.tl-head-left .check { margin-top: -13px; }
.check.big { width: 30px; height: 29px; border: 3px solid #777; border-radius: 2px; }
.slider { position: absolute; left: 316px; top: 72px; width: 131px; height: 6px; background: #d0d0d0; border-radius: 3px; }
.slider-thumb { position: absolute; left: 10px; top: -10px; width: 26px; height: 26px; border-radius: 50%; background: #8f8f8f; }
.slider::before { content: ""; position: absolute; left: 0; top: 0; width: 23px; height: 6px; background: #8f8f8f; border-radius: 3px; }
.group { padding: 0 0 2px 17px; gap: 17px; font-size: 22px; white-space: nowrap; color: #333; }
.minus { width: 20px; height: 20px; border: 2px solid #444; position: relative; flex: none; border-radius: 1px; }
.minus::after { content: ""; position: absolute; left: 4px; top: 7px; width: 8px; height: 2px; background: #444; }
.gray { background-color: #dedede; background-image: repeating-linear-gradient(to right, transparent 0 99px, #ececec 99px 101px, transparent 101px 200px); }
.grid { background-image: repeating-linear-gradient(to right, transparent 0 99px, #efefef 99px 100px); }
.driver { padding-left: 91px; }
.driver.has-check { padding-left: 14px; }
.driver.has-check .dot { margin-left: 50px; }
.dot { width: 34px; height: 34px; border-radius: 50%; border: 2px solid #111; flex: none; }
.d-purple { background: #c5aaff; }
.d-blue { background: #3b3bfb; }
.d-green { background: #85e89e; }
.name { margin-left: 11px; font-size: 22.500px; white-space: nowrap; color: #333; }
.dots { width: 34px; height: 8px; position: absolute; left: 417px; top: 41px; fill: #111; }
.absence { height: 76px; background: repeating-linear-gradient(53deg, #dbe9f5 0 13px, #fff 13px 26px); color: #0568ae; font-size: 21.500px; padding: 3px 0 0 14px; line-height: 26px; position: relative; }
.tri { position: absolute; left: 3px; top: 9px; border: 7px solid transparent; border-left-width: 0; border-right: 7px solid #555; }
.events { display: flex; align-items: flex-start; }
.link { height: 4px; background: #0568ae; margin-top: 37px; flex: none; }
.l1 { width: 24px; }
.l2 { width: 13px; }
.ev { height: 76px; background: #0568ae; border-left: 5px solid #777; color: #fff; font-size: 23px; line-height: 70px; padding-left: 4px; overflow: hidden; white-space: nowrap; flex: none; margin-right: 2px; }
.e1 { width: 134px; }
.e2 { width: 132px; }
.e3 { width: 67px; margin-right: 0; }
.e4 { width: 160px; }

/* Panel */
.panel { position: absolute; top: 0; right: 0; bottom: 0; width: 1084px; background: #fff; box-shadow: -8px 0 16px rgba(0,0,0,.13); display: flex; }
.panel-body { width: 1034px; flex: none; padding-left: 26px; overflow: hidden; }
.panel-title-row { display: flex; align-items: center; justify-content: space-between; width: 1002px; height: 52px; margin-top: 18px; }
.panel-title { margin: -8px 0 0; font-size: 38px; font-weight: 700; color: #333; white-space: nowrap; letter-spacing: .024em; }
.close { width: 89px; height: 52px; background: #fff; border: 2px solid #d8d8d8; border-radius: 3px; display: flex; align-items: center; justify-content: center; }
.close svg { width: 14px; height: 14px; }
.map { width: 982px; height: 500px; margin-top: 39px; overflow: hidden; }
.map-svg { display: block; width: 982px; height: 500px; }
.m-area text { font-family: Roboto, sans-serif; font-weight: 500; font-size: 19.500px; letter-spacing: 2.300px; fill: #3c4043; }
.m-area .m-small { font-size: 15.500px; letter-spacing: 1.200px; }
.m-area-s { font-family: Roboto, sans-serif; font-weight: 500; font-size: 17px; fill: #3c4043; }
.m-city { font-family: Roboto, sans-serif; font-weight: 500; font-size: 43px; fill: #202124; letter-spacing: 0; }
.m-park text { font-family: Roboto, sans-serif; font-size: 22px; fill: #137333; letter-spacing: 0; }
.m-poi text { font-family: Roboto, sans-serif; font-size: 24px; fill: #0e7f8e; letter-spacing: 0; }
.m-mkt { font-family: Roboto, sans-serif; font-size: 22px; fill: #1a73e8; letter-spacing: 0; }
.m-road text { font-family: Roboto, sans-serif; font-size: 15px; fill: #6b4c2a; letter-spacing: .5px; text-anchor: middle; }
.m-road text:last-child { text-anchor: start; }
.m-lea { font-family: Roboto, sans-serif; font-style: italic; font-size: 16px; fill: #1967a8; letter-spacing: 1px; }
.m-attr { font-family: Roboto, sans-serif; font-size: 13px; fill: #444; letter-spacing: 0; }
.m-google { font-family: "Open Sans", sans-serif; font-weight: 600; font-size: 30px; letter-spacing: -1px; paint-order: stroke; stroke: rgba(255,255,255,.85); stroke-width: 2px; }
.m-km { font-family: Roboto, sans-serif; font-size: 16px; fill: #111; letter-spacing: 0; }

.select-all { display: flex; align-items: center; margin-top: 44px; height: 29px; padding-left: 39px; gap: 21px; font-size: 20px; color: #333; }
.pill { margin: 16px 0 0 3px; width: 439px; height: 43px; border-radius: 22px; background: #f1f1f1; color: #666; font-size: 20px; display: flex; align-items: center; padding-left: 37px; gap: 17px; white-space: nowrap; }
.pill-ic { width: 16px; height: 16px; flex: none; }
.filter-btn { display: flex; align-items: center; height: 52px; background: #e9e9e9; border-radius: 2px; font-size: 20px; color: #333; margin-top: 14px; }
.f1 { width: 132px; padding-left: 22px; gap: 6px; }
.filter-ic { width: 29px; height: 29px; }
.f2 { width: 156px; height: 54px; padding-left: 17px; gap: 8px; }
.down { width: 15px; height: 10px; }
.delivery { width: 981px; margin-top: 18px; border: 1px solid #dcdcdc; background: #fff; box-shadow: 0 -2px 10px rgba(0,0,0,.05); }
.delivery-head { height: 129px; background: #eee; display: flex; align-items: flex-start; padding-left: 31px; position: relative; }
.delivery-head .check { margin-top: 50px; }
.delivery-info { margin-left: 19px; margin-top: 15px; }
.delivery-name { font-size: 26px; font-weight: 700; color: #333; line-height: 30px; letter-spacing: .02em; }
.delivery-line { font-size: 22px; line-height: 33px; color: #333; letter-spacing: .03em; }
.delivery-line b { letter-spacing: -.012em; }
.delivery-line:nth-child(2) { margin-top: 4px; }
.tag { margin: 46px 0 0 auto; width: 145px; height: 35px; background: #ef5350; color: #fff; font-size: 17px; font-weight: 700; display: flex; align-items: center; justify-content: center; border-radius: 3px; letter-spacing: 0; flex: none; white-space: nowrap; }
.dots.small { position: static; width: 24px; height: 6px; margin: 58px 24px 0 12px; flex: none; }
.delivery-body { padding: 15px 0 0 29px; height: 170px; }
.section-title { margin: 0; font-size: 26px; font-weight: 700; line-height: 30px; color: #333; letter-spacing: .02em; }
.detail-cols { display: flex; margin-top: 16px; }
.detail { font-size: 20px; line-height: 24px; white-space: nowrap; color: #333; }
.detail:first-child { width: 485px; flex: none; }
.detail b { font-weight: 700; letter-spacing: 0; }
.add { display: block; width: 36px; height: 36px; margin: 5px 0 0 27px; }

.scrolls { flex: 1; display: flex; background: #fcfcfc; border-left: 1px solid #eee; }
.scroll-track { position: relative; border-right: 1px solid #eee; }
.scroll-track.inner { width: 25px; padding-left: 5px; padding-top: 82px; }
.scroll-track.outer { flex: 1; padding-left: 5px; padding-top: 5px; border-right: 0; }
.scroll-thumb { display: block; width: 13px; height: 1300px; background: #bfbfbf; border-radius: 7px 7px 0 0; }

.menu { position: absolute; left: 548px; top: 194px; width: 450px; height: 747px; margin: 0; padding: 13px 0 14px; list-style: none; background: #fff; border-radius: 8px; box-shadow: 0 8px 22px rgba(0,0,0,.32); z-index: 4; }
.menu-item { height: 80px; display: flex; align-items: center; padding: 0 0 2px 29px; gap: 19px; font-size: 20.500px; color: #333; white-space: nowrap; position: relative; letter-spacing: .013em; }
.menu-item svg { width: 21px; height: 21px; flex: none; }
.menu-item.current { background: #f4f4f4; box-shadow: inset 0 0 0 6px #1877e8; margin: 0 0 0 -1px; padding-left: 30px; }
.step { position: absolute; right: -12px; top: -10px; width: 34px; height: 34px; border-radius: 50%; background: #1877e8; color: #fff; font-size: 21px; font-weight: 700; display: flex; align-items: center; justify-content: center; letter-spacing: 0; }
```
